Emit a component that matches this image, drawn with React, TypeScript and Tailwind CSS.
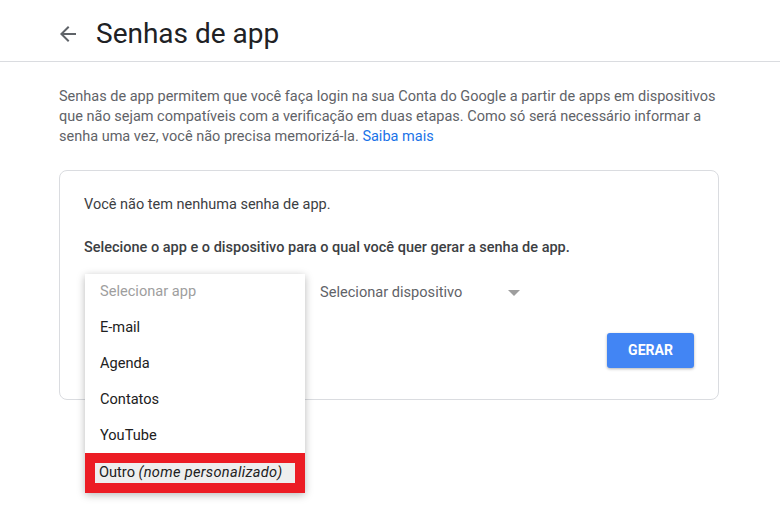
export default function App() {
  const items = ["E-mail", "Agenda", "Contatos", "YouTube"];

  return (
    <div className="w-[780px] h-[516px] bg-white overflow-hidden font-['Roboto',sans-serif]">
      <header className="h-[62px] border-b border-[#dadce0] flex items-center pt-[6px] pl-[56px]">
        <svg width="24" height="24" viewBox="0 0 24 24" className="fill-[#5f6368]">
          <path d="M20 11H7.83l5.59-5.59L12 4l-8 8 8 8 1.41-1.41L7.83 13H20v-2z" />
        </svg>
        <h1 className="ml-[16px] text-[28px] text-[#202124] leading-none">Senhas de app</h1>
      </header>

      <div className="px-[59px]">
        <p className="mt-[25px] w-[660px] text-[14.5px] leading-[20px] text-[#5f6368]">
          Senhas de app permitem que você faça login na sua Conta do Google a partir de apps em dispositivos
          que não sejam compatíveis com a verificação em duas etapas. Como só será necessário informar a
          senha uma vez, você não precisa memorizá-la. <a className="text-[#1a73e8]">Saiba mais</a>
        </p>

        <div className="mt-[23px] w-[660px] h-[230px] border border-[#dadce0] rounded-lg px-[24px] pt-[24px]">
          <p className="text-[14.5px] leading-[20px] text-[#3c4043]">Você não tem nenhuma senha de app.</p>
          <p className="mt-[23px] text-[14.5px] leading-[20px] font-medium text-[#3c4043]">
            Selecione o app e o dispositivo para o qual você quer gerar a senha de app.
          </p>

          <div className="relative mt-[25px] flex items-center h-[20px]">
            <div className="w-[236px] pl-[16px] text-[14.6px] text-[#757575]">Selecionar app</div>
            <div className="w-[200px] text-[14.6px] text-[#5f6368]">Selecionar dispositivo</div>
            <svg width="12" height="6" viewBox="0 0 12 6" className="ml-[-12px] fill-[#9e9e9e]">
              <path d="M0 0h12L6 6z" />
            </svg>

            <div className="absolute left-[1px] top-[-9px] w-[220px] bg-white shadow-[0_2px_8px_rgba(0,0,0,0.28)]">
              <div className="h-[36px] flex items-center pl-[15px] text-[14.6px] text-[#9e9e9e]">Selecionar app</div>
              {items.map((it) => (
                <div key={it} className="h-[36px] flex items-center pl-[15px] text-[14.6px] text-[#212121]">
                  {it}
                </div>
              ))}
              <div className="-mt-px bg-[#ec1c24] p-[10px]">
                <div className="h-[20px] bg-[#eeeeee] flex items-center pl-[4px] text-[14.6px] text-[#212121]">
                  Outro&nbsp;<i className="tracking-[0.3px]">(nome personalizado)</i>
                </div>
              </div>
            </div>
          </div>

          <div className="flex justify-end mt-[30px]">
            <button className="w-[87px] h-[35px] rounded-[3px] bg-[#4285f4] text-white text-[14px] font-bold shadow-[0_1px_3px_rgba(0,0,0,0.3)]">
              GERAR
            </button>
          </div>
        </div>
      </div>
    </div>
  );
}
